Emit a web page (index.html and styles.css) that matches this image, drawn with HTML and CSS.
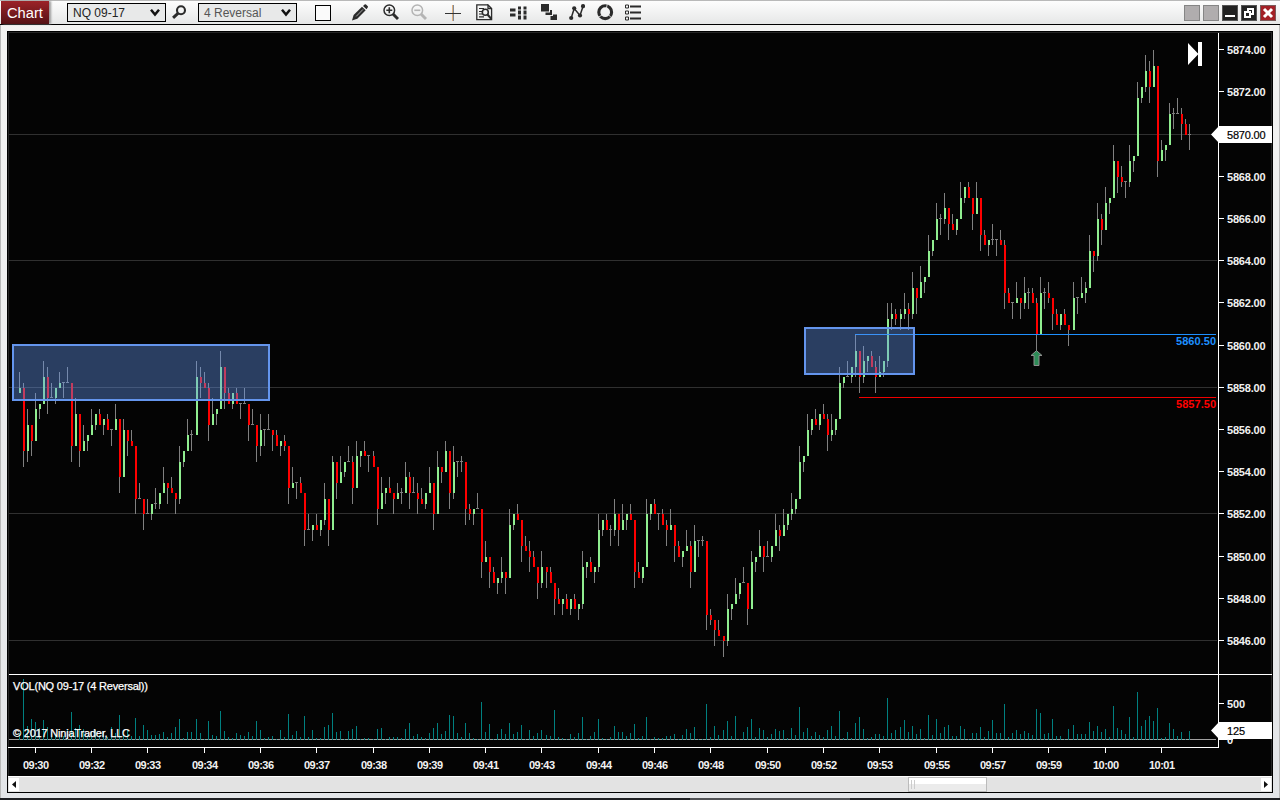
FILE: index.html
```html
<!DOCTYPE html>
<html lang="en">
<head>
<meta charset="utf-8">
<title>Chart</title>
<link rel="stylesheet" href="styles.css">
</head>
<body>
<div class="window">
  <header class="toolbar">
    <div class="tab">Chart</div>
    <div class="select select-instrument"><span>NQ 09-17</span>
      <svg class="chevron" width="10" height="8" viewBox="0 0 10 8"><path d="M1 .8 5 5.6 9 .8" fill="none" stroke="#111" stroke-width="2.5"/></svg>
    </div>
    <svg class="icon search" width="15" height="15" viewBox="0 0 15 15"><circle cx="9" cy="5.3" r="4" fill="none" stroke="#2b2b2b" stroke-width="2.1"/><path d="M6.2 8.2 1.1 12.8" stroke="#2b2b2b" stroke-width="3"/></svg>
    <div class="select select-interval"><span>4 Reversal</span>
      <svg class="chevron" width="10" height="8" viewBox="0 0 10 8"><path d="M1 .8 5 5.6 9 .8" fill="none" stroke="#111" stroke-width="2.5"/></svg>
    </div>
    <div class="swatch"></div>
    <svg class="icon pencil" width="16" height="17" viewBox="0 0 16 17"><path d="M0 16.5 1.6 11 10 2.8 13.7 6.2 5.3 14.8Z" fill="#2b2b2b"/><path d="M11 1.9 12.6.4Q13.3 0 14 .5L15.8 2.3Q16.2 3 15.7 3.6L14.5 5.3Z" fill="#2b2b2b"/><path d="M4.2 12.4 11 5.4" stroke="#aaa" stroke-width="1"/></svg>
    <svg class="icon zoom-in" width="16" height="17" viewBox="0 0 16 17"><circle cx="6.3" cy="6.3" r="5.3" fill="none" stroke="#2b2b2b" stroke-width="1.5"/><path d="M3.3 6.3H9.3M6.3 3.3V9.3" stroke="#2b2b2b" stroke-width="1.6"/><path d="M10 10 15 15" stroke="#2b2b2b" stroke-width="3"/></svg>
    <svg class="icon zoom-out" width="16" height="17" viewBox="0 0 16 17"><circle cx="6.3" cy="6.3" r="5.3" fill="none" stroke="#b4b4b4" stroke-width="1.5"/><path d="M3.3 6.3H9.3" stroke="#b4b4b4" stroke-width="1.6"/><path d="M10 10 15 15" stroke="#b4b4b4" stroke-width="3"/></svg>
    <svg class="icon cross" width="16" height="17" viewBox="0 0 16 17"><path d="M7.5 1V17" stroke="#e2b07c" stroke-width="1"/><path d="M8.5 1V17" stroke="#7f8a99" stroke-width="1"/><path d="M0 9.5H16" stroke="#333" stroke-width="1"/></svg>
    <svg class="icon report" width="17" height="17" viewBox="0 0 17 17"><path d="M12 .9H.8V15.6H15.6V4.5L12 .9V4.5H15.6" fill="none" stroke="#2b2b2b" stroke-width="1.3"/><path d="M3 4.5H8M3 7.5H6M3 10H6M3 12.8H8" stroke="#2b2b2b" stroke-width="1.2"/><circle cx="9.3" cy="8.3" r="3" fill="none" stroke="#2b2b2b" stroke-width="1.6"/><path d="M11.5 10.5 15.4 15" stroke="#2b2b2b" stroke-width="2"/></svg>
    <svg class="icon columns" width="17" height="17" viewBox="0 0 17 17" fill="#2b2b2b"><path d="M0 4.5H5.5V7.5H0ZM0 9.5H5.5V12.5H0ZM8 2.5H11V5.5H8ZM8 6.5H11V10.5H8ZM8 11.5H11V15.5H8ZM13.5 2.5H16.5V5.5H13.5ZM13.5 6.5H16.5V10.5H13.5ZM13.5 11.5H16.5V15.5H13.5Z"/></svg>
    <svg class="icon blocks" width="16" height="17" viewBox="0 0 16 17" fill="#2b2b2b"><path d="M0 0H8V7.5H0ZM9 6H11V11H4.5V8.5H9ZM12 10.5H16V16H9.5V12H12Z"/></svg>
    <svg class="icon zigzag" width="16" height="17" viewBox="0 0 16 17"><path d="M2.2 14 5.2 4.5 11 11.5 14 2.5" fill="none" stroke="#2b2b2b" stroke-width="1.5"/><g fill="#2b2b2b"><circle cx="2.2" cy="14" r="2.1"/><circle cx="5.2" cy="4.3" r="2.1"/><circle cx="11" cy="11.5" r="2.1"/><circle cx="14" cy="2.2" r="2.1"/></g></svg>
    <svg class="icon ring" width="17" height="17" viewBox="0 0 17 17"><circle cx="8.2" cy="8.2" r="6.4" fill="none" stroke="#2b2b2b" stroke-width="3.1"/><path d="M10.3 0 9.3 4.5M11.8 11 15 14.5M1 13.5 5 11" stroke="#eee" stroke-width=".8"/></svg>
    <svg class="icon list" width="16" height="17" viewBox="0 0 16 17"><path d="M.5 1H3.5V4H.5ZM.5 7H3.5V10H.5ZM.5 13H3.5V16H.5Z" fill="none" stroke="#2b2b2b" stroke-width="1"/><path d="M5 2.5H16M5 8.5H16M5 14.5H16" stroke="#2b2b2b" stroke-width="1.8"/></svg>
    <div class="controls">
      <span class="control"></span>
      <span class="control"></span>
      <span class="control control-dark"><svg width="14" height="14"><path d="M2 9H12V11H2Z" fill="#fff"/></svg></span>
      <span class="control control-dark"><svg width="14" height="14"><path d="M6 3H11V8H6ZM3 6H8V11H3Z" fill="none" stroke="#fff" stroke-width="2"/><path d="M4 7H7V10H4Z" fill="#222"/></svg></span>
      <span class="control control-close"><svg width="14" height="14"><path d="M3 3 11 11M11 3 3 11" stroke="#fff" stroke-width="3"/></svg></span>
    </div>
  </header>
  <main class="frame">
    <svg class="chart" id="chart" width="1264" height="744" viewBox="8 32 1264 744"></svg>
    <div class="scrollbar">
      <span class="arrow"><svg width="10" height="13"><path d="M7 3V10L3 6.5Z" fill="#111"/></svg></span>
      <div class="thumb"><i></i><i></i></div>
      <span class="arrow"><svg width="10" height="13"><path d="M3 3V10L7 6.5Z" fill="#111"/></svg></span>
    </div>
  </main>
  <footer class="edge"><span></span></footer>
</div>
<script src="chart.js"></script>
</body>
</html>
```
FILE: styles.css
```css
* { box-sizing: border-box; }
body { margin: 0; background: #ececec; font-family: "Liberation Sans", Arial, sans-serif; }
.window {
  width: 1280px; height: 800px; display: flex; flex-direction: column; overflow: hidden;
  background: linear-gradient(#f4f4f3, #e3e5e8);
  box-shadow: inset 1px 0 #b9b9b9, inset -1px 0 #b9b9b9;
}
.toolbar {
  height: 25px; flex: none; display: flex; align-items: flex-start; padding-left: 1px;
  border-top: 1px solid #b9b9b9; border-bottom: 1px solid #000;
  background: linear-gradient(#fdfdfd, #e6e7e7);
}
.tab {
  width: 48px; height: 23px; padding-left: 6px; line-height: 24px; font-size: 14.7px; color: #fff;
  background: linear-gradient(#9c2328, #551216); box-shadow: 2px 0 2px #999;
}
.select {
  height: 19px; width: 99px; margin-top: 2px; padding: 0 5px; border: 1px solid #000;
  display: flex; align-items: center; justify-content: space-between;
  background: #e8e9e9; font-size: 12px; color: #222; white-space: nowrap;
}
.select-instrument { margin-left: 18px; }
.select-interval { margin-left: 11px; color: #555; }
.icon { flex: none; display: block; margin-top: 3px; }
.search { margin: 4px 0 0 6px; }
.swatch { width: 16px; height: 16px; margin: 4px 0 0 18px; border: 1px solid #000; background: #fafafa; }
.pencil { margin-left: 21px; }
.zoom-in { margin-left: 15px; }
.zoom-out { margin-left: 12px; }
.cross { margin-left: 18px; }
.report { margin-left: 15px; }
.columns { margin-left: 17px; }
.blocks { margin-left: 14px; }
.zigzag { margin-left: 12px; }
.ring { margin-left: 12px; }
.list { margin-left: 11px; }
.controls { display: flex; gap: 3px; margin: 4px 4px 0 auto; }
.control { width: 16px; height: 16px; border: 1px solid #858585; background: #b0adae; }
.control svg { display: block; }
.control-dark { border-color: #555; background: #222; }
.control-close { border-color: #7c5a5a; background: #a32026; }
.frame { width: 1266px; height: 762px; flex: none; margin: 6px 0 0 7px; border: 1px solid #000; background: #040404; }
.chart { display: block; }
.scrollbar {
  height: 16px; display: flex; justify-content: space-between; align-items: center;
  padding: 0 1px; border-top: 1px solid #fff; background: #e3e3e3;
}
.arrow { width: 10px; height: 13px; background: #fff; }
.arrow svg { display: block; }
.thumb {
  width: 79px; height: 15px; margin-left: 615px; padding: 2px 2px; display: flex; gap: 2px;
  border: 1px solid #bbb; background: linear-gradient(#fff 50%, #ebebeb 50%);
}
.thumb i { width: 1px; height: 9px; background: #ccc; }
.edge { height: 2px; margin-top: auto; background: #1e1f22; }
.edge span { display: block; width: 160px; height: 2px; margin-left: 690px; background: #505154; }
.axis-label { font-size: 11px; font-weight: bold; fill: #f2f2f2; }
.note { font-size: 11px; fill: #fff; stroke: #fff; stroke-width: .25px; }
.marker-label { font-size: 11px; fill: #000; stroke: #000; stroke-width: .2px; }
.line-label { font-size: 11px; font-weight: bold; }
.zone { fill: #6495ed; fill-opacity: .4; stroke: #6495ed; stroke-width: 2; }
```
FILE: chart.js
```js
// Candles as "open high low close", counted in 0.25-point ticks above 5846.00.
const candles = `47 51 47 48,48 49 33 36,36 44 34 41,41 41 35 38,38 47 38 44,44 45 42 45,45 53 45 50,50 52 43 46,46 49 46 46,46 48 45 48
48 51 48 49,49 49 46 49,49 52 49 49,49 49 34 37,37 46 37 43,43 43 33 36,36 41 36 38,38 39 36 39,39 44 39 41,41 43 40 43
43 44 41 41,41 42 39 42,42 43 40 40,40 40 37 40,40 45 40 42,42 42 28 31,31 42 31 40,40 40 35 38,38 40 37 37,37 37 24 27
27 30 27 27,27 27 21 24,24 27 24 24,24 26 23 26,26 29 25 26,26 28 25 28,28 33 28 30,30 30 26 29,29 31 28 28,28 28 24 27
27 37 26 34,34 36 33 36,36 42 36 39,39 40 36 39,39 53 39 50,50 52 46 49,49 51 48 48,48 49 38 41,41 46 41 43,43 44 41 44
44 55 44 52,52 52 44 47,47 48 45 45,45 47 44 47,47 48 45 45,45 45 42 45,45 48 45 45,45 45 38 41,41 44 41 41,41 41 34 37
37 43 35 40,40 40 37 40,40 43 40 40,40 40 36 39,39 40 37 37,37 38 35 38,38 39 36 37,37 37 26 29,29 33 29 30,30 30 27 30
30 31 28 28,28 28 18 21,21 24 21 21,21 22 19 22,22 24 21 21,21 23 20 23,23 30 22 27,27 27 18 21,21 35 21 34,34 34 27 30
30 35 30 32,32 34 31 34,34 37 34 34,34 35 26 29,29 38 29 35,35 36 33 36,36 38 35 35,35 35 32 35,35 36 33 33,33 33 22 25
25 31 25 28,28 29 26 29,29 31 28 28,28 28 24 27,27 30 27 28,28 29 26 28,28 34 28 31,31 32 25 28,28 31 28 28,28 30 24 27
27 29 26 26,26 28 25 28,28 33 28 30,30 30 21 24,24 36 24 33,33 33 30 32,32 38 32 36,36 36 25 28,28 37 27 34,34 34 31 34
34 35 32 34,34 34 22 25,25 26 23 24,24 25 22 25,25 28 25 25,25 25 12 15,15 19 15 16,16 16 10 13,13 14 11 11,11 12 9 12
12 16 11 13,13 13 9 12,12 25 12 22,22 24 21 24,24 26 23 23,23 23 15 18,18 20 17 17,17 19 13 16,16 17 14 14,14 14 8 11
11 17 10 14,14 14 10 13,13 14 11 11,11 11 5 8,8 10 7 7,7 8 5 8,8 9 6 6,6 8 5 8,8 9 6 6,6 7 4 7
7 17 6 14,14 15 12 15,15 16 13 13,13 14 11 14,14 24 13 21,21 23 20 23,23 24 21 21,21 22 18 21,21 27 20 24,24 24 18 21
21 26 21 23,23 24 21 24,24 26 23 23,23 23 10 13,13 15 12 12,12 14 11 14,14 27 14 24,24 26 23 26,26 27 24 24,24 24 21 24
24 25 22 22,22 23 18 21,21 25 21 22,22 22 15 18,18 19 16 16,16 17 14 17,17 21 17 18,18 19 10 13,13 22 13 19,19 19 16 19
19 20 18 19,19 19 2 5,5 6 3 4,4 4 -1 2,2 4 1 1,1 1 -3 0,0 9 -1 6,6 7 4 7,7 12 7 9,9 11 8 11
11 14 11 11,11 11 3 6,6 17 6 15,15 16 13 16,16 21 16 18,18 18 13 16,16 19 16 16,16 18 15 18,18 24 18 21,21 22 17 20
20 25 20 22,22 24 21 24,24 28 23 25,25 27 24 27,27 37 27 34,34 35 32 35,35 43 35 40,40 42 39 42,42 44 41 41,41 43 40 43
43 45 42 42,42 43 36 39,39 43 38 40,40 42 39 42,42 52 42 49,49 50 48 50,50 53 50 50,50 52 49 52,52 58 50 55,55 55 47 50
50 56 49 53,53 54 51 54,54 55 52 52,52 53 47 50,50 54 50 51,51 53 50 53,53 64 52 61,61 64 59 62,62 63 60 61,61 63 59 62
62 66 61 63,63 64 59 62,62 70 61 67,67 67 62 65,65 71 65 68,68 69 66 69,69 77 69 74,74 76 73 76,76 83 76 80,80 81 77 80
80 85 79 82,82 82 76 79,79 81 78 78,78 80 77 80,80 87 80 84,84 86 83 86,86 87 84 84,84 84 78 81,81 87 81 84,84 84 74 77
77 78 75 75,75 76 73 76,76 79 75 76,76 76 73 76,76 78 75 75,75 76 63 66,66 67 64 64,64 64 61 64,64 68 64 65,65 65 61 64
64 69 63 66,66 67 63 66,66 67 64 64,64 65 55 58,58 69 58 66,66 67 63 66,66 68 64 65,65 65 59 62,62 63 60 60,60 62 59 62
62 63 60 60,60 60 56 59,59 68 59 65,65 65 62 65,65 69 65 66,66 68 64 67,67 77 67 74,74 74 70 73,73 83 72 80,80 81 75 78
78 86 78 83,83 84 81 84,84 94 84 91,91 91 85 88,88 90 86 87,87 87 84 87,87 94 86 91,91 92 89 92,92 106 92 103,103 105 102 105
105 111 104 108,108 110 102 105,105 112 105 109,109 109 88 91,91 95 91 93,93 94 91 94,94 102 94 100,100 101 97 100,100 103 100 100,100 101 95 98
98 99 96 96,96 98 93 96`.split(/[,\n]/).map(c => c.trim().split(' ').map(Number));

// Volume column heights, one per candle.
const volumes = `7 61 14 21 18 12 20 13 8 5 3 4 10 28 12 15 11 4 8 10 5 9 3 13 7 25 6 10 4 22 4 15 10 5 5 6 8 3 7 13
21 2 8 8 21 7 1 19 5 4 29 9 3 2 7 5 4 8 4 19 10 2 3 4 1 10 3 26 5 9 3 24 3 10 2 2 13 15 27 8
9 1 9 11 14 1 2 2 1 11 12 1 3 3 3 2 11 17 4 6 3 2 7 12 17 6 9 25 24 7 3 17 7 2 1 38 8 16 1 6
11 6 17 6 8 15 1 10 4 7 10 5 4 30 3 2 1 6 3 7 23 1 4 8 21 2 1 3 14 8 8 4 7 16 2 4 23 1 3 2
2 4 4 6 1 5 11 7 13 1 1 36 3 14 5 10 19 4 24 1 8 13 21 3 12 10 3 6 11 9 10 2 12 5 33 8 12 4 8 5
3 10 14 4 29 2 8 2 17 23 11 2 3 6 6 4 42 7 10 13 20 8 14 6 11 2 25 5 21 7 13 15 4 4 14 11 1 7 7 13
3 9 20 7 7 36 3 7 10 6 9 7 5 31 27 6 7 21 4 4 1 11 15 6 6 6 18 9 14 8 11 3 34 12 10 6 23 3 48 14
20 24 19 32 2 3 17 11 4 8 1 9`.split(/\s+/).map(Number);

const barX = i => 19 + 4 * i + Math.floor(3 * i / 131);
const priceY = t => Math.floor(640.5 - 5.275 * t);
const rect = (x, y, w, h, fill) => `<rect x="${x}" y="${y}" width="${w}" height="${h}" fill="${fill}"/>`;
const text = (x, y, s, cls, len, extra = '') =>
  `<text x="${x}" y="${y}" class="${cls}" textLength="${len}" ${extra}>${s}</text>`;

let shapes = rect(8, 32, 1264, 1, '#262626') + rect(8, 32, 1, 744, '#262626') + rect(1271, 32, 1, 744, '#262626');
for (let t = 0; t <= 96; t += 24) shapes += rect(9, priceY(t), 1208, 1, '#303030');

candles.forEach(([o, h, l, c], i) => {
  const x = barX(i);
  shapes += rect(x, priceY(h) + 1, 1, priceY(l) - priceY(h), '#808080');
  if (o === c) shapes += rect(x - 1, priceY(o), 3, 1, '#808080');
  else {
    const top = priceY(Math.max(o, c));
    shapes += rect(x, top + 1, 2, priceY(Math.min(o, c)) - top, c > o ? '#90ee90' : '#ff0000');
  }
});

shapes += rect(9, 739, 1207, 1, '#a0a0a0');
volumes.forEach((v, i) => { shapes += rect(barX(i), 740 - v, 1, v, '#008080'); });

shapes += rect(855, 334, 361, 1, '#1e90ff') + rect(859, 397, 357, 1, '#f00000');
shapes += '<rect class="zone" x="13" y="345" width="256" height="55"/><rect class="zone" x="805" y="328" width="109" height="46"/>';

shapes += rect(9, 674, 1263, 1, '#fff') + rect(8, 747, 1211, 1, '#fff') + rect(1218, 33, 1, 715, '#fff');
let labels = '';
for (let t = 0; t <= 112; t += 8) {
  const y = priceY(t);
  shapes += rect(1219, y, 5, 1, '#fff');
  if (t !== 96) labels += text(1227, y + 5, (5846 + t / 4).toFixed(2), 'axis-label', 38.5);
}
shapes += rect(1219, 703, 5, 1, '#fff') + rect(1219, 739, 14, 1, '#fff');
labels += text(1227, 708, '500', 'axis-label', 18) + text(1227, 744, '0', 'axis-label', 6);

['09:30', '09:32', '09:33', '09:34', '09:36', '09:37', '09:38', '09:39', '09:41', '09:43', '09:44',
 '09:46', '09:48', '09:50', '09:52', '09:53', '09:55', '09:57', '09:59', '10:00', '10:01'].forEach((s, n) => {
  const x = barX(4 + 14 * n);
  shapes += rect(x, 748, 1, 5, '#fff');
  labels += text(x - 12, 769, s, 'axis-label', 26);
});

labels += text(13, 690, 'VOL(NQ 09-17 (4 Reversal))', 'note', 135);
labels += text(13, 737, '© 2017 NinjaTrader, LLC', 'note', 117);
labels += text(1176, 345, '5860.50', 'line-label', 40, 'fill="#1e90ff"');
labels += text(1176, 408, '5857.50', 'line-label', 40, 'fill="#ff0000"');

const markers =
  '<path d="M1211 134.5 1219 126H1272V143H1219ZM1211 730.5 1219 722H1272V739H1219Z" fill="#fff"/>' +
  text(1227, 139, '5870.00', 'marker-label', 38.5) + text(1227, 735, '125', 'marker-label', 18) +
  '<path d="M1188 43 1198 53.5V42H1202V66H1198V54.5L1188 65Z" fill="#fff"/>' +
  '<path d="M1036.5 350.6 1042 355.5H1039V365.5H1034V355.5H1031Z" fill="#2e8b57" stroke="#8f8f8f"/>';

document.getElementById('chart').innerHTML = `<g shape-rendering="crispEdges">${shapes}</g>${labels}${markers}`;
```
